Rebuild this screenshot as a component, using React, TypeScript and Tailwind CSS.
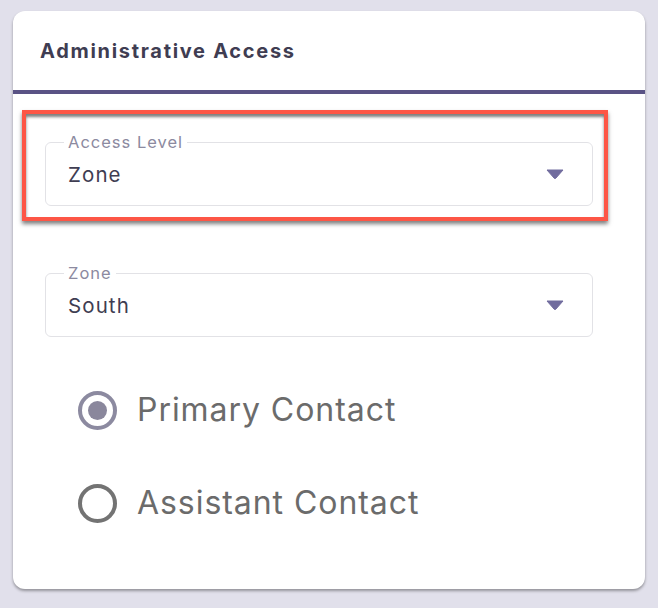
import React from 'react';

const font = { fontFamily: 'Inter, "Noto Sans", sans-serif' };

const Caret = () => (
  <svg width="18" height="10" viewBox="0 0 18 10" className="absolute right-[28px] top-1/2 -translate-y-1/2">
    <path d="M1 1 L17 1 L9.8 9.2 Q9 10 8.2 9.2 Z" fill="#716c9e" stroke="#716c9e" strokeWidth="1" strokeLinejoin="round" />
  </svg>
);

const SelectField = ({ label, value }: { label: string; value: string }) => (
  <div className="relative h-[64px] rounded-[6px] border border-[#e2e2e6] flex items-center pl-[22px]">
    <span className="absolute left-[18px] -top-[12px] bg-white px-[4px] text-[16.5px] leading-[22px] tracking-[1px] text-[#8c8aa0]">
      {label}
    </span>
    <span className="text-[20.5px] leading-[26px] tracking-[1.1px] text-[#3f3d52] mt-[2px]">{value}</span>
    <Caret />
  </div>
);

const Radio = ({ label, checked }: { label: string; checked?: boolean }) => (
  <div className="flex items-center gap-[20px] h-[40px]">
    <div
      className={
        checked
          ? 'w-[39px] h-[39px] rounded-full border-[4px] border-[#8c8aa0] flex items-center justify-center'
          : 'w-[39px] h-[39px] rounded-full border-[4px] border-[#737373]'
      }
    >
      {checked && <div className="w-[19px] h-[19px] rounded-full bg-[#8a879c]" />}
    </div>
    <span className="text-[32px] leading-[40px] text-[#6b6b6b] tracking-[0.95px]">{label}</span>
  </div>
);

export default function App() {
  return (
    <div className="min-h-[608px] bg-[#e1e0eb] pt-[11px] px-[13px]" style={font}>
      <div className="w-[632px] h-[578px] bg-white rounded-[12px] shadow-[0_2px_3px_rgba(0,0,0,0.35)] overflow-hidden">
        <div className="h-[79px] flex items-center pl-[27px] pt-[1px]">
          <h2 className="text-[20px] font-bold text-[#3f3d52] tracking-[1.7px]">Administrative Access</h2>
        </div>
        <div className="h-[4px] bg-[#5a5385]" />

        <div className="pt-[16px]">
          <div className="ml-[9px] w-[586px] border-[4px] border-[#fd5646] pt-[28px] pr-[11px] pb-[11px] pl-[19px] shadow-[0_3px_4px_rgba(0,0,0,0.5),inset_0_3px_3px_rgba(0,0,0,0.5)]">
            <SelectField label="Access Level" value="Zone" />
          </div>

          <div className="ml-[32px] w-[548px] mt-[52px]">
            <SelectField label="Zone" value="South" />
          </div>

          <div className="ml-[65px] mt-[53px] flex flex-col gap-[53px]">
            <Radio label="Primary Contact" checked />
            <Radio label="Assistant Contact" />
          </div>
        </div>
      </div>
    </div>
  );
}
